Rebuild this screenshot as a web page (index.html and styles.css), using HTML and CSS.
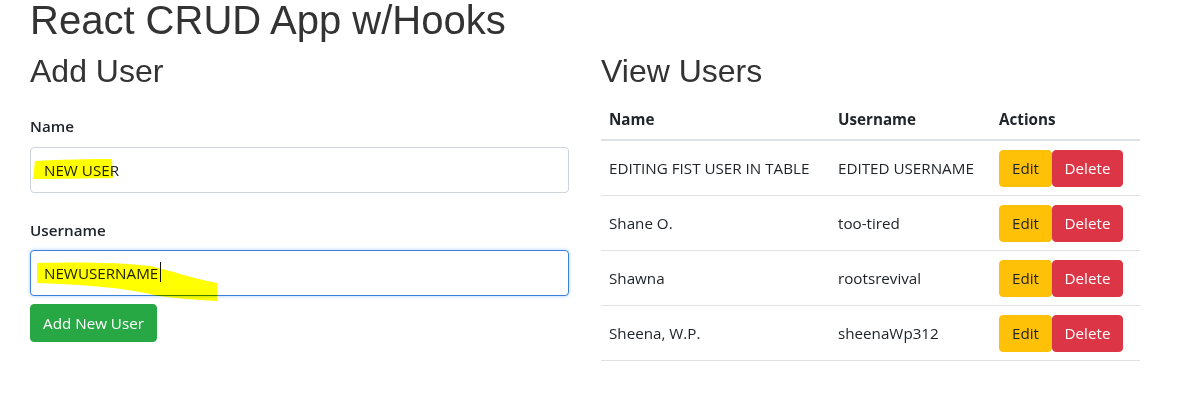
FILE: index.html
```html
<!DOCTYPE html>
<html lang="en">
<head>
<meta charset="utf-8">
<title>React CRUD App w/Hooks</title>
<link rel="stylesheet" href="styles.css">
</head>
<body>
<div class="container">
  <h1 class="title">React CRUD App w/Hooks</h1>
  <div class="row">
    <div class="col">
      <h2 class="heading">Add User</h2>
      <form class="form">
        <div class="group">
          <label class="label" for="name">Name</label>
          <div class="field">
            <input class="input" id="name" type="text" value="NEW USER">
            <svg class="marker" width="540" height="46" viewBox="0 0 540 46">
              <path d="M5,14 C30,12.5 60,12 82,12 L83,31 C55,31.5 25,32 3,32 Z" fill="#ffff00"/>
            </svg>
          </div>
        </div>
        <div class="group group-last">
          <label class="label" for="username">Username</label>
          <div class="field">
            <input class="input input-focus" id="username" type="text" value="NEWUSERNAME">
            <svg class="marker" width="540" height="46" viewBox="0 0 540 46">
              <path d="M7,13 C40,12 90,12 120,16 C140,20 160,28 187,33 L187,51 C165,50 145,48 128,46 C105,40 70,35 7,33 Z" fill="#ffff00"/>
            </svg>
            <span class="caret"></span>
          </div>
        </div>
        <button class="btn btn-success" type="button">Add New User</button>
      </form>
    </div>
    <div class="col">
      <h2 class="heading">View Users</h2>
      <table class="table">
        <colgroup>
          <col class="c-name"><col class="c-user"><col class="c-act">
        </colgroup>
        <thead>
          <tr><th>Name</th><th>Username</th><th>Actions</th></tr>
        </thead>
        <tbody>
          <tr>
            <td>EDITING FIST USER IN TABLE</td><td>EDITED USERNAME</td>
            <td class="actions"><button class="btn btn-warning" type="button">Edit</button><button class="btn btn-danger" type="button">Delete</button></td>
          </tr>
          <tr>
            <td>Shane O.</td><td>too-tired</td>
            <td class="actions"><button class="btn btn-warning" type="button">Edit</button><button class="btn btn-danger" type="button">Delete</button></td>
          </tr>
          <tr>
            <td>Shawna</td><td>rootsrevival</td>
            <td class="actions"><button class="btn btn-warning" type="button">Edit</button><button class="btn btn-danger" type="button">Delete</button></td>
          </tr>
          <tr>
            <td>Sheena, W.P.</td><td>sheenaWp312</td>
            <td class="actions"><button class="btn btn-warning" type="button">Edit</button><button class="btn btn-danger" type="button">Delete</button></td>
          </tr>
        </tbody>
      </table>
    </div>
  </div>
</div>
</body>
</html>
```
FILE: styles.css
```css
* { box-sizing: border-box; }

body {
  margin: 0;
  font-family: "Open Sans", "Noto Sans", sans-serif;
  font-size: 15.2px;
  line-height: 1.5;
  color: #212529;
  background: #fff;
}

.container {
  width: 1141px;
  padding: 0 0 0 30px;
}

.title {
  margin: 0;
  font-family: "Liberation Sans", Arial, sans-serif;
  font-weight: 400;
  font-size: 40px;
  line-height: 40px;
  color: #333;
}

.row {
  display: grid;
  grid-template-columns: 540px 540px;
  column-gap: 31px;
}

.heading {
  margin: 12px 0 0;
  font-family: "Liberation Sans", Arial, sans-serif;
  font-weight: 400;
  font-size: 32px;
  line-height: 1.2;
  color: #333;
}

.form {
  margin-top: 25px;
}

.group {
  margin-bottom: 25.5px;
}

.group-last {
  margin-bottom: 8px;
}

.label {
  display: block;
  margin-bottom: 9px;
  font-weight: 600;
  color: #212529;
}

.field {
  position: relative;
}

.input {
  display: block;
  width: 539px;
  height: 46px;
  padding: 0 13px;
  font: inherit;
  color: #222;
  background: #fff;
  border: 1px solid #cfd4da;
  border-radius: 4px;
  outline: none;
}

.input-focus {
  border-color: #3d7fdc;
  box-shadow: 0 0 3px 1px rgba(80, 150, 255, 0.3);
}

.marker {
  position: absolute;
  left: 0;
  top: 0;
  overflow: visible;
  mix-blend-mode: multiply;
  pointer-events: none;
}

.caret {
  position: absolute;
  left: 130px;
  top: 12px;
  width: 1px;
  height: 20px;
  background: #111;
}

.btn {
  display: inline-block;
  height: 37.5px;
  padding: 0;
  font: inherit;
  line-height: 35px;
  text-align: center;
  white-space: nowrap;
  border: 1px solid transparent;
  border-radius: 4px;
  cursor: pointer;
  vertical-align: middle;
}

.btn-success {
  width: 127px;
  color: #fff;
  background: #28a745;
  border-color: #28a745;
}

.btn-warning {
  width: 53px;
  height: 37px;
  color: #212529;
  background: #ffc107;
  border-color: #ffc107;
}

.btn-danger {
  width: 71px;
  height: 37px;
  color: #fff;
  background: #dc3545;
  border-color: #dc3545;
}

.table {
  width: 539px;
  margin-top: 10px;
  border-collapse: collapse;
  table-layout: fixed;
}

.c-name { width: 229px; }
.c-user { width: 161px; }
.c-act { width: 149px; }

.table th {
  padding: 8px;
  text-align: left;
  font-weight: 700;
  vertical-align: bottom;
  border-bottom: 2px solid #dee2e6;
}

.table td {
  padding: 8.5px 8px;
  vertical-align: middle;
  border-bottom: 1px solid #dee2e6;
  white-space: nowrap;
}

.actions {
  font-size: 0;
}

.actions .btn {
  font-size: 15.2px;
}
```
